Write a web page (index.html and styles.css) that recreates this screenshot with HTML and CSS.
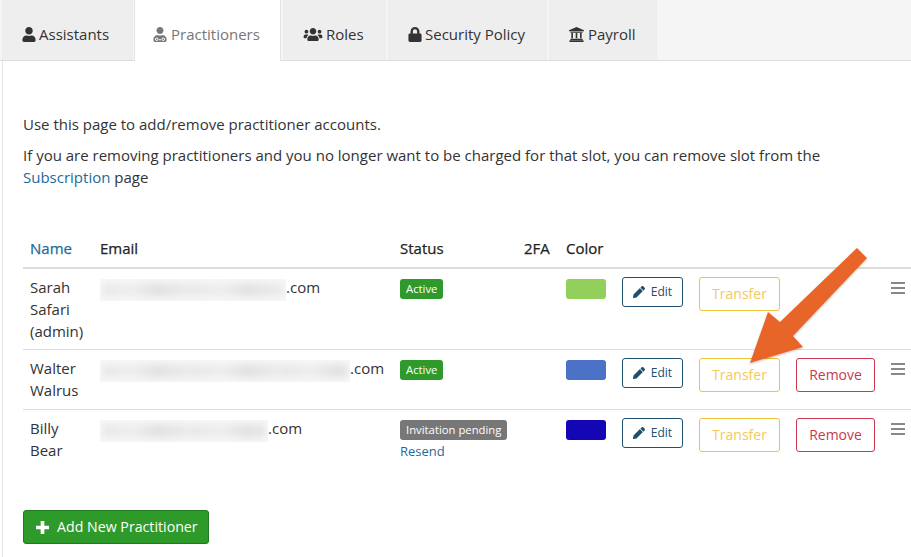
FILE: index.html
```html
<!DOCTYPE html>
<html lang="en">
<head>
<meta charset="utf-8">
<title>Practitioners</title>
<link rel="stylesheet" href="styles.css">
</head>
<body>
<nav class="tabs">
  <a class="tab tab-assistants"><svg class="ic" viewBox="0 0 448 512"><path d="M224 256c70.7 0 128-57.3 128-128S294.7 0 224 0 96 57.3 96 128s57.3 128 128 128zm89.6 32h-16.7c-22.2 10.2-46.9 16-72.9 16s-50.6-5.8-72.9-16h-16.7C60.2 288 0 348.2 0 422.4V464c0 26.5 21.5 48 48 48h352c26.5 0 48-21.5 48-48v-41.6c0-74.2-60.2-134.4-134.4-134.4z"/></svg>Assistants</a>
  <a class="tab tab-practitioners active"><svg class="ic ic-doc" viewBox="0 0 448 512"><path d="M224 240c66 0 120-54 120-120S290 0 224 0 104 54 104 120s54 120 120 120z"/><path fill-rule="evenodd" d="M130 270C54 284 0 340 0 416v48c0 26 22 48 48 48h352c26 0 48-22 48-48v-48c0-76-54-132-130-146-26 12-58 20-94 20s-68-8-94-20zM112 360a58 58 0 1 0 0.1 0zM336 360a58 58 0 1 0 0.1 0z"/><path d="M112 392a26 26 0 1 0 .1 0zM336 392a26 26 0 1 0 .1 0z"/><path d="M190 420h68v36h-68z" fill="#fff"/></svg>Practitioners</a>
  <a class="tab tab-roles"><svg class="ic ic-wide" viewBox="0 0 640 512"><path d="M96 224c35.3 0 64-28.7 64-64s-28.7-64-64-64-64 28.7-64 64 28.7 64 64 64zm448 0c35.3 0 64-28.7 64-64s-28.7-64-64-64-64 28.7-64 64 28.7 64 64 64zm32 32h-64c-17.6 0-33.5 7.1-45.1 18.6 40.3 22.1 68.9 62 75.1 109.4h66c17.7 0 32-14.3 32-32v-32c0-35.3-28.7-64-64-64zm-256 0c61.9 0 112-50.1 112-112S381.9 32 320 32 208 82.1 208 144s50.1 112 112 112zm76.8 32h-8.3c-20.8 10-43.9 16-68.5 16s-47.6-6-68.5-16h-8.3C179.6 288 128 339.6 128 403.2V432c0 26.5 21.5 48 48 48h288c26.5 0 48-21.5 48-48v-28.8c0-63.6-51.6-115.2-115.2-115.2zm-223.7-13.4C161.5 263.1 145.6 256 128 256H64c-35.3 0-64 28.7-64 64v32c0 17.7 14.3 32 32 32h65.9c6.3-47.4 34.9-87.3 75.2-109.4z"/></svg>Roles</a>
  <a class="tab tab-security"><svg class="ic" viewBox="0 0 448 512"><path d="M400 224h-24v-72C376 68.2 307.8 0 224 0S72 68.2 72 152v72H48c-26.5 0-48 21.5-48 48v192c0 26.5 21.5 48 48 48h352c26.5 0 48-21.5 48-48V272c0-26.5-21.5-48-48-48zm-104 0H152v-72c0-39.7 32.3-72 72-72s72 32.3 72 72v72z"/></svg>Security Policy</a>
  <a class="tab tab-payroll"><svg class="ic ic-bank" viewBox="0 0 512 512"><path d="M256 0L0 112v32h512v-32z"/><path d="M48 160h416v32H48zM80 208h56v176H80zM228 208h56v176h-56zM376 208h56v176h-56zM48 400h416v40H48zM16 456h480v56H16z"/></svg>Payroll</a>
</nav>

<main class="content">
  <p class="intro">Use this page to add/remove practitioner accounts.</p>
  <p class="note">If you are removing practitioners and you no longer want to be charged for that slot, you can remove slot from the <a class="link">Subscription</a> page</p>

  <table class="staff">
    <colgroup>
      <col class="c-name"><col class="c-email"><col class="c-status"><col class="c-2fa"><col class="c-color"><col class="c-actions"><col class="c-handle">
    </colgroup>
    <thead>
      <tr>
        <th class="th-name"><a class="link">Name</a></th>
        <th>Email</th>
        <th>Status</th>
        <th>2FA</th>
        <th>Color</th>
        <th></th>
        <th></th>
      </tr>
    </thead>
    <tbody>
      <tr>
        <td class="td-text td-name">Sarah Safari (admin)</td>
        <td class="td-text td-email"><span class="blur w186"></span>.com</td>
        <td class="td-status"><span class="badge green">Active</span></td>
        <td></td>
        <td><span class="swatch lime"></span></td>
        <td><div class="actions"><a class="btn edit"><svg class="pen" viewBox="0 0 512 512"><path d="M497.9 142.1l-46.1 46.1c-4.7 4.7-12.3 4.7-17 0l-111-111c-4.7-4.7-4.7-12.3 0-17l46.1-46.1c18.7-18.7 49.1-18.7 67.9 0l60.1 60.1c18.8 18.7 18.8 49.1 0 67.9zM284.2 99.8L21.6 362.4.4 483.9c-2.9 16.4 11.4 30.6 27.8 27.8l121.5-21.3 262.6-262.6c4.7-4.7 4.7-12.3 0-17l-111-111c-4.8-4.7-12.4-4.7-17.1 0z"/></svg>Edit</a><a class="btn transfer">Transfer</a></div></td>
        <td><span class="handle"></span></td>
      </tr>
      <tr>
        <td class="td-text td-name">Walter Walrus</td>
        <td class="td-text td-email"><span class="blur w250"></span>.com</td>
        <td class="td-status"><span class="badge green">Active</span></td>
        <td></td>
        <td><span class="swatch blue"></span></td>
        <td><div class="actions"><a class="btn edit"><svg class="pen" viewBox="0 0 512 512"><path d="M497.9 142.1l-46.1 46.1c-4.7 4.7-12.3 4.7-17 0l-111-111c-4.7-4.7-4.7-12.3 0-17l46.1-46.1c18.7-18.7 49.1-18.7 67.9 0l60.1 60.1c18.8 18.7 18.8 49.1 0 67.9zM284.2 99.8L21.6 362.4.4 483.9c-2.9 16.4 11.4 30.6 27.8 27.8l121.5-21.3 262.6-262.6c4.7-4.7 4.7-12.3 0-17l-111-111c-4.8-4.7-12.4-4.7-17.1 0z"/></svg>Edit</a><a class="btn transfer">Transfer</a><a class="btn remove">Remove</a></div></td>
        <td><span class="handle"></span></td>
      </tr>
      <tr>
        <td class="td-text td-name">Billy Bear</td>
        <td class="td-text td-email"><span class="blur w168"></span>.com</td>
        <td class="td-status"><span class="badge grey">Invitation pending</span><a class="link resend">Resend</a></td>
        <td></td>
        <td><span class="swatch navy"></span></td>
        <td><div class="actions"><a class="btn edit"><svg class="pen" viewBox="0 0 512 512"><path d="M497.9 142.1l-46.1 46.1c-4.7 4.7-12.3 4.7-17 0l-111-111c-4.7-4.7-4.7-12.3 0-17l46.1-46.1c18.7-18.7 49.1-18.7 67.9 0l60.1 60.1c18.8 18.7 18.8 49.1 0 67.9zM284.2 99.8L21.6 362.4.4 483.9c-2.9 16.4 11.4 30.6 27.8 27.8l121.5-21.3 262.6-262.6c4.7-4.7 4.7-12.3 0-17l-111-111c-4.8-4.7-12.4-4.7-17.1 0z"/></svg>Edit</a><a class="btn transfer">Transfer</a><a class="btn remove">Remove</a></div></td>
        <td><span class="handle"></span></td>
      </tr>
    </tbody>
  </table>

  <a class="add"><svg class="plus" viewBox="0 0 14 14"><path d="M5 0h4v5h5v4H9v5H5V9H0V5h5z"/></svg>Add New Practitioner</a>
</main>

<svg class="arrow" viewBox="0 0 911 557"><defs><filter id="sh" x="-10%" y="-10%" width="120%" height="120%"><feDropShadow dx="0" dy="1" stdDeviation="1.2" flood-color="#000" flood-opacity=".25"/></filter></defs><path filter="url(#sh)" d="M857 248L867 258 793 336 803 347 750 363 768 312 780 322z"/></svg>
</body>
</html>
```

FILE: styles.css
```css
* { box-sizing: border-box; }
html, body { margin: 0; padding: 0; }
body {
  width: 911px;
  height: 557px;
  overflow: hidden;
  background: #fff;
  color: #333;
  font-family: "Open Sans", sans-serif;
  font-size: 15px;
  line-height: 22px;
  position: relative;
}
.tabs {
  display: flex;
  height: 61px;
  padding-left: 2px;
  background: #f5f5f5;
  border-bottom: 1px solid #ddd;
}
.tab {
  height: 60px;
  padding: 23px 0 0 20px;
  background: #eee;
  color: #333;
  display: flex;
  align-items: flex-start;
  white-space: nowrap;
}
.tab-assistants { width: 131px; }
.tab-practitioners { width: 147px; margin-left: 1px; padding-left: 18px; }
.tab-roles { width: 103px; margin-left: 2px; }
.tab-security { width: 159px; margin-left: 2px; }
.tab-payroll { width: 108px; margin-left: 2px; }
.tab.active {
  background: #fff;
  height: 61px;
  color: #777;
  border-left: 1px solid #e4e4e4;
  border-right: 1px solid #e4e4e4;
}
.ic { width: 14px; height: 15px; margin: 4px 3px 0 0; fill: currentColor; flex: none; }
.ic-doc { margin-right: 4px; }
.ic-wide { width: 20px; }
.ic-bank { width: 15px; margin-right: 4px; }
.content {
  margin-left: 2px;
  padding: 52px 0 0 20px;
  border-left: 1px solid #e4e4e4;
  height: 496px;
}
.intro { margin: 0 0 9px; }
.note { margin: 0; width: 860px; }
.link { color: #1f6a9a; }
.staff {
  table-layout: fixed;
  border-collapse: separate;
  border-spacing: 0;
  width: 888px;
  margin-top: 49px;
}
.c-name { width: 69px; }
.c-email { width: 300px; }
.c-status { width: 124px; }
.c-2fa { width: 42px; }
.c-color { width: 56px; }
.c-actions { width: 268px; }
.c-handle { width: 29px; }
.staff th {
  text-align: left;
  font-weight: 500;
  color: #222;
  -webkit-text-stroke: 0.25px;
  padding: 0 8px 8px;
  border-bottom: 2px solid #ddd;
}
.staff td {
  vertical-align: top;
  height: 60px;
  padding: 8px 8px 6px;
  border-bottom: 1px solid #ddd;
}
.staff td.td-text { padding-top: 7px; padding-bottom: 7px; }
.staff tbody tr:last-child td { border-bottom: 0; }
.staff .th-name, .staff .td-name { padding-left: 7px; padding-right: 0; }
.td-email, .td-status { white-space: nowrap; }
.blur {
  display: inline-block;
  position: relative;
  overflow: hidden;
  height: 22px;
  margin-top: 3px;
  vertical-align: top;
  background: #f8f8f8;
}
.blur::before {
  content: "";
  position: absolute;
  inset: 4px 2px;
  background: repeating-linear-gradient(90deg, #e8e8e8 0, #eeeeee 30px, #e1e1e1 55px, #ececec 90px);
  filter: blur(3.5px);
}
.w186 { width: 186px; }
.w250 { width: 250px; }
.w168 { width: 168px; }
.badge {
  display: inline-block;
  color: #fff;
  font-size: 11.3px;
  font-weight: 500;
  line-height: 16px;
  padding: 2px 6px;
  border-radius: 3px;
  vertical-align: top;
  margin-top: 2px;
}
.green { background: #2f9a2b; }
.grey { background: #777; }
.resend { display: block; font-size: 13px; line-height: 20px; margin-top: 1px; }
.swatch { display: block; width: 40px; height: 20px; border-radius: 3px; margin-top: 2px; }
.lime { background: #93cf5b; }
.blue { background: #4c72c7; }
.navy { background: #1405b5; }
.actions { display: flex; align-items: flex-start; }
.btn {
  flex: none;
  display: flex;
  align-items: center;
  justify-content: center;
  border: 1px solid;
  border-radius: 3px;
  white-space: nowrap;
  font-size: 14px;
}
.edit { width: 61px; height: 30px; border-color: #20506f; color: #20506f; font-size: 12px; }
.pen { width: 12px; height: 12px; fill: currentColor; margin-right: 6px; }
.transfer { width: 81px; height: 34px; margin-left: 16px; border-color: #f0c33c; color: #f5c95d; }
.remove { width: 79px; height: 34px; margin-left: 16px; border-color: #c8384f; color: #c8384f; }
.handle {
  display: block;
  width: 14px;
  height: 12px;
  margin: 5px 0 0 1px;
  border-top: 2px solid #888;
  border-bottom: 2px solid #888;
}
.handle::after {
  content: "";
  display: block;
  height: 2px;
  margin-top: 3px;
  background: #888;
}
.add {
  display: flex;
  align-items: center;
  width: 186px;
  height: 34px;
  margin-top: 40px;
  padding-left: 12px;
  background: #2e9a2a;
  border: 1px solid #217a1f;
  border-radius: 3px;
  color: #fff;
  font-size: 14.2px;
  white-space: nowrap;
}
.plus { width: 13px; height: 13px; fill: #fff; margin-right: 8px; }
.arrow {
  position: absolute;
  left: 0;
  top: 0;
  width: 911px;
  height: 557px;
  fill: #e8652a;
  pointer-events: none;
}
```
